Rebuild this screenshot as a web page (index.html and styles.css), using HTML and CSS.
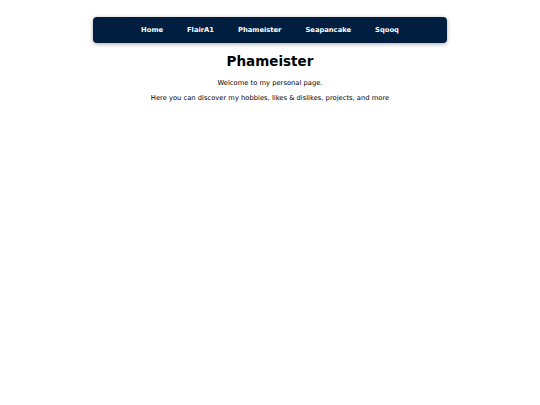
FILE: index.html
```html
<!DOCTYPE html>
<html>
<head>
<meta charset="utf-8">
<link rel="stylesheet" href="styles.css">
</head>
<body>
<nav class="nav">
  <a class="nav-link" href="#">Home</a>
  <a class="nav-link" href="#">FlairA1</a>
  <a class="nav-link" href="#">Phameister</a>
  <a class="nav-link" href="#">Seapancake</a>
  <a class="nav-link" href="#">Sqooq</a>
</nav>
<main class="content">
  <h1 class="title">Phameister</h1>
  <p class="text">Welcome to my personal page.</p>
  <p class="text">Here you can discover my hobbies, likes &amp; dislikes, projects, and more</p>
</main>
</body>
</html>
```
FILE: styles.css
```css
html, body {
  margin: 0;
  padding: 0;
  background: #ffffff;
  font-family: "DejaVu Sans", Verdana, sans-serif;
  color: #000;
}
.nav {
  width: 354px;
  height: 26px;
  margin: 17px auto 0;
  background: #001f40;
  border-radius: 4px;
  box-shadow: 0 1px 4px rgba(0,0,0,0.35);
  display: flex;
  justify-content: center;
  align-items: center;
  gap: 24px;
}
.nav-link {
  color: #ffffff;
  text-decoration: none;
  font-weight: bold;
  font-size: 6.75px;
}
.content {
  text-align: center;
}
.title {
  font-size: 13.5px;
  font-weight: bold;
  margin: 10px 0 10px;
}
.text {
  font-size: 6.75px;
  margin: 0 0 7px;
}
```
